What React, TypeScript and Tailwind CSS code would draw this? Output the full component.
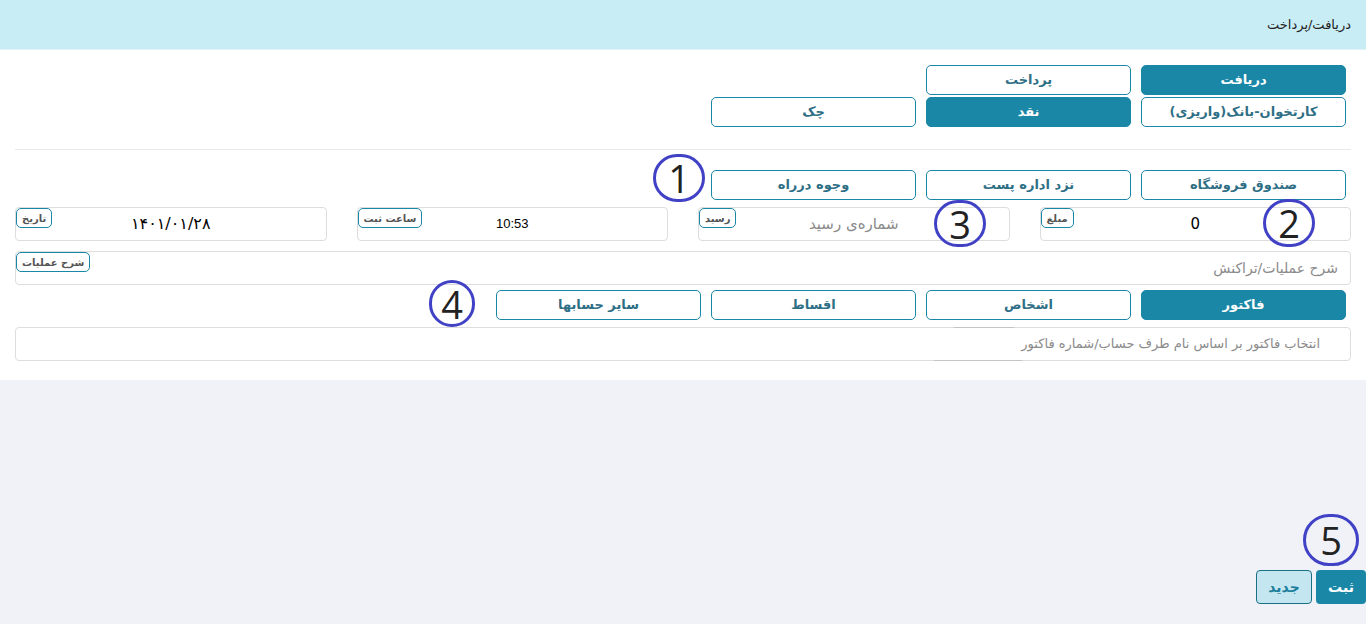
import React from "react";

const teal = "bg-[#1a87a7] text-white border-[#1a87a7]";
const outline = "bg-white text-[#2f6f86] border-[#1a87a7]";

function Btn({ label, active }: { label: string; active?: boolean }) {
  return (
    <button
      className={`h-[30px] w-[205px] rounded-[5px] border text-[13px] font-bold ${
        active ? teal : outline
      }`}
    >
      {label}
    </button>
  );
}

function Badge({ label }: { label: string }) {
  return (
    <span className="absolute left-0 top-0 flex h-[20px] items-center rounded-[5px] border border-[#1a87a7] bg-white px-[5px] text-[10px] font-bold text-[#555]">
      {label}
    </span>
  );
}

function Field({
  label,
  value,
  placeholder,
  className = "",
}: {
  label: string;
  value?: string;
  placeholder?: string;
  className?: string;
}) {
  return (
    <div className="relative h-[34px] rounded-[4px] border border-[#dddddd] bg-white">
      <Badge label={label} />
      <div className={`flex h-full items-center justify-center ${className}`}>
        {value ? value : <span className="text-[15px] text-[#8a8a8a]">{placeholder}</span>}
      </div>
    </div>
  );
}

function Marker({ n, className }: { n: number; className: string }) {
  return (
    <div
      className={`pointer-events-none absolute flex items-center justify-center rounded-full border-[3px] border-[#4141c6] text-[38px] font-normal leading-none text-[#222] ${className}`}
      style={{ fontFamily: "'Open Sans', 'Liberation Sans', sans-serif" }}
    >
      {n}
    </div>
  );
}

export default function App() {
  return (
    <div
      dir="rtl"
      className="relative flex min-h-[624px] flex-col bg-[#f0f2f8] text-[#222]"
      style={{ fontFamily: "'DejaVu Sans', sans-serif" }}
    >
      <header className="flex h-[50px] items-center border-b border-[#e3f4f9] bg-[#c9edf5] px-[15px] text-[13px]">
        دریافت/پرداخت
      </header>

      <section className="bg-white px-[15px] pb-[19px] pt-[15px]">
        <div className="flex flex-col gap-[2px] pr-[5px]">
          <div className="flex gap-[10px]">
            <Btn label="دریافت" active />
            <Btn label="پرداخت" />
          </div>
          <div className="flex gap-[10px]">
            <Btn label="کارتخوان-بانک(واریزی)" />
            <Btn label="نقد" active />
            <Btn label="چک" />
          </div>
        </div>

        <div className="mb-[20px] mt-[22px] h-px bg-[#e9e9e9]" />

        <div className="flex gap-[10px] pr-[5px]">
          <Btn label="صندوق فروشگاه" />
          <Btn label="نزد اداره پست" />
          <Btn label="وجوه درراه" />
        </div>

        <div className="mt-[7px] grid grid-cols-4 gap-x-[30px]">
          <Field label="مبلغ" value="0" className="text-[15px] text-black" />
          <Field label="رسید" placeholder="شماره‌ی رسید" />
          <Field
            label="ساعت ثبت"
            value="10:53"
            className="text-[13px] text-black [font-family:'Liberation_Sans',sans-serif]"
          />
          <Field label="تاریخ" value="۱۴۰۱/۰۱/۲۸" className="text-[16px] text-black" />
        </div>

        <div className="relative mt-[10px] h-[34px] rounded-[4px] border border-[#dddddd]">
          <Badge label="شرح عملیات" />
          <div className="flex h-full items-center px-[12px] text-[14px] text-[#8a8a8a]">
            شرح عملیات/تراکنش
          </div>
        </div>

        <div className="mt-[5px] flex gap-[10px] pr-[5px]">
          <Btn label="فاکتور" active />
          <Btn label="اشخاص" />
          <Btn label="اقساط" />
          <Btn label="سایر حسابها" />
        </div>

        <div className="relative mt-[7px] h-[34px] rounded-[4px] border border-[#dddddd]">
          <div className="flex h-full items-center pr-[30px] text-[13px] text-[#8a8a8a]">
            انتخاب فاکتور بر اساس نام طرف حساب/شماره فاکتور
          </div>
          <div className="absolute -top-px left-[938px] h-px w-[60px] bg-[#c4c4c4]" />
          <div className="absolute -bottom-px left-[918px] h-px w-[88px] bg-[#c4c4c4]" />
        </div>
      </section>

      <div className="flex flex-1 items-end pb-[20px]">
        <div className="flex gap-[4px]">
          <button className="h-[34px] w-[50px] rounded-[4px] bg-[#1a87a7] text-[14px] font-bold text-white">
            ثبت
          </button>
          <button className="h-[34px] w-[56px] rounded-[4px] border border-[#1d6f86] bg-[#c3e6f1] text-[14px] font-bold text-[#1d7f9c]">
            جدید
          </button>
        </div>
      </div>

      <Marker n={1} className="left-[653px] top-[154px] h-[48px] w-[52px]" />
      <Marker n={2} className="left-[1263px] top-[199px] h-[48px] w-[52px]" />
      <Marker n={3} className="left-[934px] top-[200px] h-[47px] w-[52px]" />
      <Marker n={4} className="left-[429px] top-[280px] h-[47px] w-[46px]" />
      <Marker n={5} className="left-[1303px] top-[514px] h-[52px] w-[56px]" />
    </div>
  );
}
